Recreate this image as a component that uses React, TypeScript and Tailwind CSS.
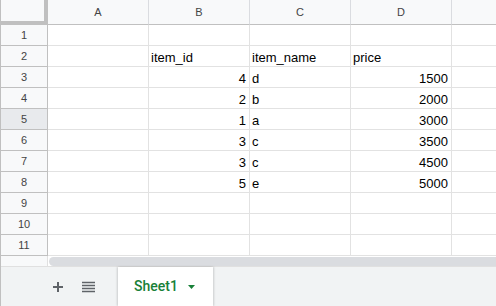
import React from "react";

const cols = ["A", "B", "C", "D"];
type Row = { b?: string; c?: string; d?: string; head?: boolean };
const rows: Row[] = [
  {},
  { b: "item_id", c: "item_name", d: "price", head: true },
  { b: "4", c: "d", d: "1500" },
  { b: "2", c: "b", d: "2000" },
  { b: "1", c: "a", d: "3000" },
  { b: "3", c: "c", d: "3500" },
  { b: "3", c: "c", d: "4500" },
  { b: "5", c: "e", d: "5000" },
  {},
  {},
  {},
];

const font = { fontFamily: "Arial, 'Liberation Sans', sans-serif" };

export default function App() {
  return (
    <div className="w-[496px] h-[306px] overflow-hidden bg-white flex flex-col border-l border-[#c0c0c0]" style={font}>
      <div className="grid grid-cols-[47px_101px_101px_101px_101px_1fr]">
        {/* header row */}
        <div className="h-[25px] bg-[#f8f9fa] border-r-4 border-b-4 border-[#c0c0c0]" />
        {cols.map((c) => (
          <div
            key={c}
            className="h-[25px] bg-[#f8f9fa] border-r border-r-[#dadce0] border-b border-b-[#c0c0c0] flex items-center justify-center text-[11px] text-[#444]"
          >
            {c}
          </div>
        ))}
        <div className="h-[25px] bg-[#f8f9fa] border-b border-b-[#c0c0c0]" />
        {rows.map((r, i) => (
          <React.Fragment key={i}>
            <div
              className={`h-[21px] border-r border-r-[#c0c0c0] border-b border-b-[#c0c0c0] flex items-center justify-center text-[11px] text-[#444] ${
                i === 4 ? "bg-[#e8eaed]" : "bg-[#f8f9fa]"
              }`}
            >
              {i + 1}
            </div>
            <div className="h-[21px] border-r border-b border-[#e2e2e2]" />
            <div
              className={`h-[21px] border-r border-b border-[#e2e2e2] flex items-end pb-[1px] pl-[2px] pr-[3px] text-[13px] leading-[15px] text-black ${
                r.head ? "justify-start" : "justify-end"
              }`}
            >
              {r.b}
            </div>
            <div className="h-[21px] border-r border-b border-[#e2e2e2] flex items-end pb-[1px] pl-[2px] pr-[3px] text-[13px] leading-[15px] text-black">
              {r.c}
            </div>
            <div
              className={`h-[21px] border-r border-b border-[#e2e2e2] flex items-end pb-[1px] pl-[2px] pr-[3px] text-[13px] leading-[15px] text-black ${
                r.head ? "justify-start" : "justify-end"
              }`}
            >
              {r.d}
            </div>
            <div className="h-[21px] border-b border-[#e2e2e2]" />
          </React.Fragment>
        ))}
      </div>
      {/* scrollbar row */}
      <div className="h-[11px] flex border-b border-[#e0e0e0]">
        <div className="w-[47px] bg-[#f8f9fa] border-r border-[#e0e0e0]" />
        <div className="flex-1 pl-[1px] pt-[1px]">
          <div className="h-[9px] bg-[#dadce0] rounded-l-full" />
        </div>
      </div>
      {/* tab bar */}
      <div className="flex-1 bg-[#f1f3f4] flex items-stretch">
        <div className="w-[117px] flex items-center">
          <svg width="12" height="12" viewBox="0 0 12 12" className="ml-[51px]">
            <path d="M6 1v10M1 6h10" stroke="#5f6368" strokeWidth="2" />
          </svg>
          <svg width="13" height="12" viewBox="0 0 13 12" className="ml-[18px]">
            <path d="M0 1.5h13M0 4.5h13M0 7.5h13M0 10.5h13" stroke="#5f6368" strokeWidth="1.6" />
          </svg>
        </div>
        <div className="w-[95px] bg-white flex items-center shadow-[-1px_0_2px_rgba(0,0,0,0.15),1px_0_2px_rgba(0,0,0,0.15)]">
          <span
            className="ml-[16px] text-[14px] font-medium text-[#188038]"
            style={{ fontFamily: "Roboto, 'Liberation Sans', sans-serif" }}
          >
            Sheet1
          </span>
          <svg width="7" height="4" viewBox="0 0 7 4" className="ml-[10px]">
            <path d="M0 0h7L3.5 4z" fill="#188038" />
          </svg>
        </div>
      </div>
    </div>
  );
}
